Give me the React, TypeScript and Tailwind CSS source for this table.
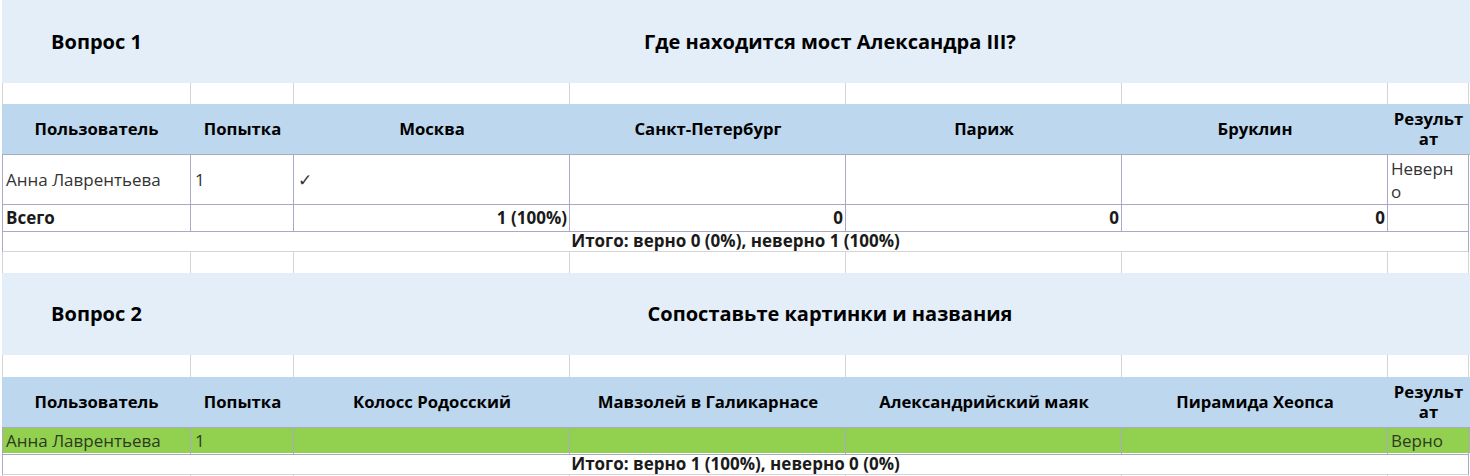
import React from "react";

const COLS = "grid grid-cols-[189px_103px_276px_276px_276px_266px_81px]";
const LIGHT = "border-[#d4d4d4]";
const TBL = "border-[#a9a9c6]";

function BlankRow({ h }: { h: string }) {
  return (
    <div className={`${COLS} ${h}`}>
      {[0, 1, 2, 3, 4, 5, 6].map((i) => (
        <div
          key={i}
          className={`border-r ${LIGHT} ${i === 0 ? "border-l" : ""}`}
        />
      ))}
    </div>
  );
}

function Band({ q, title, h }: { q: string; title: string; h: string }) {
  return (
    <div className={`${COLS} ${h} bg-[#e3eef9]`}>
      <div className="flex items-center justify-center text-[20px] font-bold text-black">
        {q}
      </div>
      <div className="col-span-6 flex items-center justify-center text-[20px] font-bold text-black">
        {title}
      </div>
    </div>
  );
}

function Header({ cols }: { cols: string[] }) {
  const all = ["Пользователь", "Попытка", ...cols];
  return (
    <div className={`${COLS} h-[51px] bg-[#bdd7ee] border-b ${TBL}`}>
      {all.map((c, i) => (
        <div
          key={i}
          className="flex items-center justify-center text-center text-[16.7px] leading-[20px] font-bold text-black"
        >
          {c}
        </div>
      ))}
      <div className="flex items-center justify-center text-center text-[16.7px] leading-[20px] font-bold text-black break-all px-[3px]">
        Результат
      </div>
    </div>
  );
}

export default function App() {
  return (
    <div
      className="w-[1470px] h-[476px] overflow-hidden bg-white pl-[2px]"
      style={{ fontFamily: '"Open Sans", "Noto Sans", sans-serif' }}
    >
      <Band q="Вопрос 1" title="Где находится мост Александра III?" h="h-[83px]" />
      <BlankRow h="h-[21px]" />
      <Header cols={["Москва", "Санкт-Петербург", "Париж", "Бруклин"]} />
      {/* data row */}
      <div className={`${COLS} h-[50px] text-[17px] text-[#333]`}>
        <div className={`border-l border-r border-b ${TBL} flex items-center pl-[3px]`}>
          Анна Лаврентьева
        </div>
        <div className={`border-r border-b ${TBL} flex items-center pl-[4px]`}>1</div>
        <div className={`border-r border-b ${TBL} flex items-center pl-[4px]`}>✓</div>
        <div className={`border-r border-b ${TBL}`} />
        <div className={`border-r border-b ${TBL}`} />
        <div className={`border-r border-b ${TBL}`} />
        <div className={`border-r border-b ${TBL} flex items-center pl-[3px] pr-[8px] leading-[23px] break-all`}>
          Неверно
        </div>
      </div>
      {/* total row */}
      <div className={`${COLS} h-[25px] text-[17px] font-bold text-[#1a1a1a]`}>
        <div className={`border-l border-r border-b ${TBL} flex items-center pl-[3px]`}>Всего</div>
        <div className={`border-r border-b ${TBL}`} />
        <div className={`border-r border-b ${TBL} flex items-center justify-end pr-[2px]`}>1 (100%)</div>
        <div className={`border-r border-b ${TBL} flex items-center justify-end pr-[2px]`}>0</div>
        <div className={`border-r border-b ${TBL} flex items-center justify-end pr-[2px]`}>0</div>
        <div className={`border-r border-b ${TBL} flex items-center justify-end pr-[2px]`}>0</div>
        <div className={`border-r border-b ${TBL}`} />
      </div>
      {/* summary */}
      <div className={`h-[22px] w-[1467px] border-l border-r ${TBL} border-b border-b-[#d4d4d4] flex items-center justify-center text-[17px] font-bold text-[#1a1a1a]`}>
        Итого: верно 0 (0%), неверно 1 (100%)
      </div>
      <BlankRow h="h-[21px]" />
      <Band q="Вопрос 2" title="Сопоставьте картинки и названия" h="h-[82px]" />
      <BlankRow h="h-[22px]" />
      <Header cols={["Колосс Родосский", "Мавзолей в Галикарнасе", "Александрийский маяк", "Пирамида Хеопса"]} />
      {/* green row */}
      <div className={`${COLS} h-[25px] bg-[#92d050] text-[17px] text-[#2d3a1f]`}>
        <div className={`border-l border-r border-b ${TBL} flex items-center pl-[3px]`}>Анна Лаврентьева</div>
        <div className={`border-r border-b ${TBL} flex items-center pl-[4px]`}>1</div>
        <div className={`border-r border-b ${TBL}`} />
        <div className={`border-r border-b ${TBL}`} />
        <div className={`border-r border-b ${TBL}`} />
        <div className={`border-r border-b ${TBL}`} />
        <div className={`border-r border-b ${TBL} flex items-center pl-[3px]`}>Верно</div>
      </div>
      <div className={`h-[22px] w-[1467px] border-l border-r ${TBL} border-b border-b-[#d4d4d4] flex items-center justify-center text-[17px] font-bold text-[#1a1a1a]`}>
        Итого: верно 1 (100%), неверно 0 (0%)
      </div>
      <BlankRow h="h-[10px]" />
    </div>
  );
}
